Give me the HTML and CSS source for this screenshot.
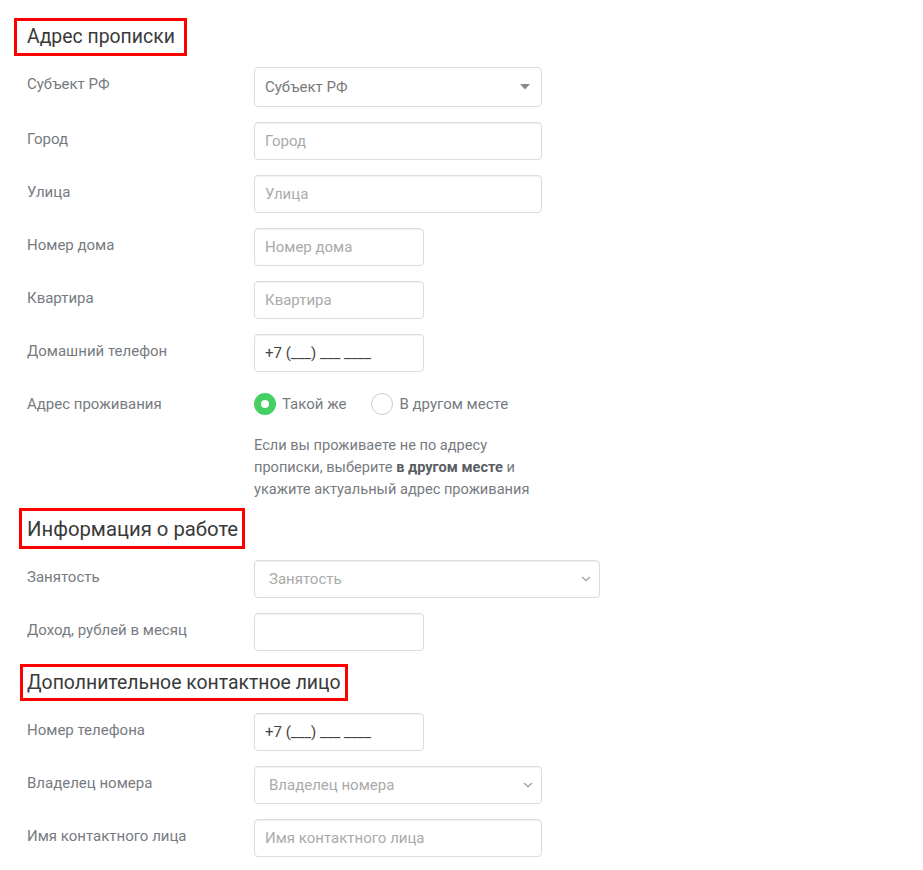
FILE: index.html
```html
<!DOCTYPE html>
<html lang="ru">
<head>
  <meta charset="UTF-8">
  <meta name="viewport" content="width=device-width, initial-scale=1.0">
  <title>Анкета</title>
  <link rel="stylesheet" href="styles.css">
</head>
<body>
  <div class="page">

    <h2 class="title title-1">Адрес прописки</h2>
    <div class="rows rows-1">
      <div class="row">
        <label class="lbl">Субъект РФ</label>
        <div class="select select-custom w-wide">
          <span>Субъект РФ</span>
          <svg width="10" height="6" viewBox="0 0 10 6"><path d="M0 0h10L5 5.5z" fill="#8a8a8a"/></svg>
        </div>
      </div>
      <div class="row">
        <label class="lbl">Город</label>
        <input class="inp w-wide" type="text" placeholder="Город">
      </div>
      <div class="row">
        <label class="lbl">Улица</label>
        <input class="inp w-wide" type="text" placeholder="Улица">
      </div>
      <div class="row">
        <label class="lbl">Номер дома</label>
        <input class="inp w-short" type="text" placeholder="Номер дома">
      </div>
      <div class="row">
        <label class="lbl">Квартира</label>
        <input class="inp w-short" type="text" placeholder="Квартира">
      </div>
      <div class="row">
        <label class="lbl">Домашний телефон</label>
        <input class="inp w-short" type="text" value="+7 (___) ___ ____">
      </div>
      <div class="row row-radio">
        <label class="lbl">Адрес проживания</label>
        <div class="radios">
          <span class="radio checked"><i></i>Такой же</span>
          <span class="radio"><i></i>В другом месте</span>
        </div>
      </div>
    </div>
    <p class="hint">Если вы проживаете не по адресу<br>прописки, выберите <b>в другом месте</b> и<br>укажите актуальный адрес проживания</p>

    <h2 class="title title-2">Информация о работе</h2>
    <div class="rows rows-2">
      <div class="row">
        <label class="lbl">Занятость</label>
        <div class="select select-native w-xwide">
          <span>Занятость</span>
          <svg width="10" height="6" viewBox="0 0 10 6"><path d="M1 1l4 3.5L9 1" fill="none" stroke="#aaa" stroke-width="1.6"/></svg>
        </div>
      </div>
      <div class="row">
        <label class="lbl">Доход, рублей в месяц</label>
        <input class="inp w-short" type="text">
      </div>
    </div>

    <h2 class="title title-3">Дополнительное контактное лицо</h2>
    <div class="rows rows-3">
      <div class="row">
        <label class="lbl">Номер телефона</label>
        <input class="inp w-short" type="text" value="+7 (___) ___ ____">
      </div>
      <div class="row">
        <label class="lbl">Владелец номера</label>
        <div class="select select-native w-wide">
          <span>Владелец номера</span>
          <svg width="10" height="6" viewBox="0 0 10 6"><path d="M1 1l4 3.5L9 1" fill="none" stroke="#aaa" stroke-width="1.6"/></svg>
        </div>
      </div>
      <div class="row">
        <label class="lbl">Имя контактного лица</label>
        <input class="inp w-wide" type="text" placeholder="Имя контактного лица">
      </div>
    </div>

  </div>
</body>
</html>
```

FILE: styles.css
```css
*{
  margin: 0;
  padding: 0;
  box-sizing: border-box;
}
body{
  background: #fff;
  font-family: Roboto, "Noto Sans", Arial, sans-serif;
  font-size: 15px;
  color: #777b81;
}

.page{
  padding: 18px 0 20px;
}

/* заголовки разделов (красная рамка) */
.title{
  display: inline-block;
  border: 3px solid #f00;
  font-size: 19.4px;
  font-weight: 400;
  line-height: 24px;
  color: #3a3a3a;
}
.title-1{
  margin-left: 14px;
  padding: 4px 9px 4px 10px;
}
.title-2{
  margin: 8px 0 0 19px;
  padding: 6px 4px 5px 5px;
  font-size: 20.3px;
}
.title-3{
  margin: 13px 0 0 20px;
  padding: 4px 4px 3px 4px;
}

.rows{
  display: flex;
  flex-direction: column;
  gap: 15px;
  padding-left: 27px;
}
.rows-1{ margin-top: 11px; }
.rows-2{ margin-top: 11px; }
.rows-3{ margin-top: 12px; }

.row{
  display: flex;
  align-items: flex-start;
}
.lbl{
  width: 227px;
  flex-shrink: 0;
  padding-top: 7px;
  line-height: 20px;
}

.inp,
.select{
  height: 38px;
  border: 1px solid #dcdcdc;
  border-radius: 4px;
  background: #fff;
  font-family: inherit;
  font-size: 15px;
  color: #444;
  box-shadow: inset 0 1px 1px rgba(0,0,0,0.06);
}
.inp{
  padding: 0 10px;
  outline: none;
}
.inp::placeholder{
  color: #aaa;
}

.w-wide{ width: 288px; }
.w-short{ width: 170px; }
.w-xwide{ width: 346px; }

.select{
  display: flex;
  align-items: center;
  justify-content: space-between;
}
.select-custom{
  height: 40px;
  padding: 0 11px 0 10px;
  color: #7a7a7a;
  box-shadow: none;
}
.select-native{
  padding: 0 8px 0 14px;
  color: #aaa;
}

.row-radio{
  height: 32px;
}
.radios{
  display: flex;
  align-items: center;
  height: 32px;
  padding-top: 1px;
  gap: 25px;
}
.radio{
  display: flex;
  align-items: center;
  gap: 6px;
}
.radio i{
  width: 22px;
  height: 22px;
  border-radius: 50%;
  border: 1px solid #ccc;
  background: #fff;
}
.radio.checked i{
  border: 7px solid #44d062;
}

.hint{
  margin: 15px 0 0 254px;
  font-size: 14.6px;
  line-height: 22px;
}
.hint b{
  color: #5a5e63;
}
```
